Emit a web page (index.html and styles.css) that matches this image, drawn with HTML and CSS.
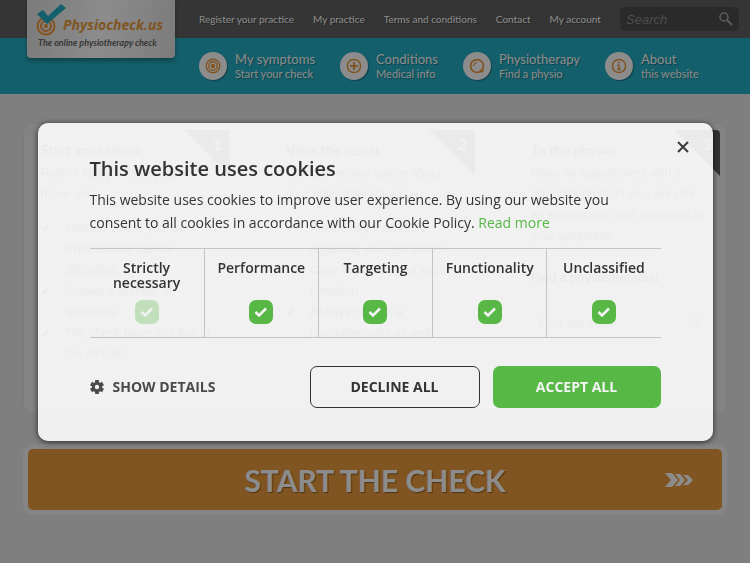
FILE: index.html
```html
<!DOCTYPE html>
<html lang="en">
<head>
  <meta charset="UTF-8">
  <meta name="viewport" content="width=device-width, initial-scale=1">
  <title>Physiocheck.us</title>
  <link rel="stylesheet" href="styles.css">
</head>
<body>
  <header>
    <a href="#" class="logo">
      <span class="logo-top">
        <svg class="logo-mark" width="32" height="34" viewBox="0 0 32 34">
          <g fill="none" stroke="#f0973a" stroke-width="2">
            <circle cx="11" cy="22" r="8.5"/>
            <circle cx="11" cy="22" r="5"/>
          </g>
          <circle cx="11" cy="22" r="2" fill="#f0973a"/>
          <path d="M2 10L8 6L13 12L26 0L31 4L12 20Z" fill="#24adc3"/>
        </svg>
        <span class="logo-name">Physiocheck.us</span>
      </span>
      <span class="logo-tagline">The online physiotherapy check</span>
    </a>

    <div class="topbar">
      <nav class="top-nav">
        <a href="#">Register your practice</a>
        <a href="#">My practice</a>
        <a href="#">Terms and conditions</a>
        <a href="#">Contact</a>
        <a href="#">My account</a>
      </nav>
      <form class="search">
        <input type="text" placeholder="Search" aria-label="Search">
        <button type="button" aria-label="Search">
          <svg width="14" height="14" viewBox="0 0 14 14" fill="none" stroke="#aaa">
            <circle cx="5" cy="5" r="4" stroke-width="1.5"/>
            <path d="M8 8L13 13" stroke-width="2"/>
          </svg>
        </button>
      </form>
    </div>

    <nav class="main-nav">
      <a href="#">
        <span class="nav-icon">
          <svg width="16" height="16" viewBox="0 0 16 16" fill="none" stroke="#eb9b3e" stroke-width="1.4">
            <circle cx="8" cy="8" r="6.8"/>
            <circle cx="8" cy="8" r="4.2"/>
            <circle cx="8" cy="8" r="1.5" fill="#eb9b3e"/>
          </svg>
        </span>
        <span class="nav-text"><strong>My symptoms</strong><small>Start your check</small></span>
      </a>
      <a href="#">
        <span class="nav-icon">
          <svg width="16" height="16" viewBox="0 0 16 16" fill="none" stroke="#eb9b3e">
            <circle cx="8" cy="8" r="6.6" stroke-width="1.5"/>
            <path d="M8 4V12M4 8H12" stroke-width="2"/>
          </svg>
        </span>
        <span class="nav-text"><strong>Conditions</strong><small>Medical info</small></span>
      </a>
      <a href="#">
        <span class="nav-icon">
          <svg width="16" height="16" viewBox="0 0 16 16" fill="none" stroke="#eb9b3e">
            <circle cx="8" cy="8" r="6.4" stroke-width="1.7"/>
            <path d="M4.5 8A4 4 0 0 1 8 4.5" stroke-width="1.2"/>
            <path d="M11.5 11.5L14 14" stroke-width="3"/>
          </svg>
        </span>
        <span class="nav-text"><strong>Physiotherapy</strong><small>Find a physio</small></span>
      </a>
      <a href="#">
        <span class="nav-icon">
          <svg width="16" height="16" viewBox="0 0 16 16" fill="none" stroke="#eb9b3e">
            <circle cx="8" cy="8" r="6.6" stroke-width="1.5"/>
            <path d="M8 3.8V5.6M6.4 7.2H8V11.5M6.2 11.5H9.8" stroke-width="1.6"/>
          </svg>
        </span>
        <span class="nav-text"><strong>About</strong><small>this website</small></span>
      </a>
    </nav>
  </header>

  <main>
    <div class="panel">
      <section class="step">
        <span class="corner">1</span>
        <h2>Start your check</h2>
        <p>Pain or injury? Make your<br>move on!</p>
        <ul>
          <li>Indicate where you are experiencing pain or difficulties.</li>
          <li>Answer a number of questions</li>
          <li>The check takes just five to ten minutes</li>
        </ul>
      </section>
      <section class="step">
        <span class="corner">2</span>
        <h2>View the result</h2>
        <p>Comprehensive advice about your physiotherapy issue</p>
        <ul>
          <li>Preliminary indication regarding your symptoms</li>
          <li>Clear explanation of each condition</li>
          <li><b>Always</b> consult a physiotherapist as well</li>
        </ul>
      </section>
      <section class="step">
        <span class="corner">3</span>
        <h2>To the physio</h2>
        <p>Make an appointment with a physiotherapist in your area for an examination and treatment of your symptoms.</p>
        <label for="zip">Find a physiotherapist</label>
        <div class="zip-box">
          <input type="text" id="zip" placeholder="Your zip-code">
          <svg width="16" height="16" viewBox="0 0 16 16" fill="none" stroke="#999">
            <circle cx="6" cy="6" r="5" stroke-width="1.2"/>
            <path d="M9.5 9.5L15 15" stroke-width="2"/>
          </svg>
        </div>
      </section>
    </div>

    <a href="#" class="start">
      <span>START THE CHECK</span>
      <svg width="29" height="14" viewBox="0 0 29 14" fill="#fff">
        <path d="M0 0H7L13 7L7 14H0L6 7Z"/>
        <path d="M10 1H15L20 7L15 13H10L15 7Z"/>
        <path d="M18 2H23L28 7L23 12H18L23 7Z"/>
      </svg>
    </a>
  </main>

  <div class="overlay">
    <div class="cookies" role="dialog" aria-labelledby="cookies-title">
      <button type="button" class="close" aria-label="Close">
        <svg width="12" height="12" viewBox="0 0 12 12" stroke="#3c3c3c" stroke-width="2">
          <path d="M1 1L11 11M11 1L1 11"/>
        </svg>
      </button>
      <h1 id="cookies-title">This website uses cookies</h1>
      <p>This website uses cookies to improve user experience. By using our website you consent to all cookies in accordance with our Cookie Policy. <a href="#">Read more</a></p>

      <div class="options">
        <div class="option">
          <label for="necessary">Strictly necessary</label>
          <input type="checkbox" id="necessary" checked disabled>
        </div>
        <div class="option">
          <label for="performance">Performance</label>
          <input type="checkbox" id="performance" checked>
        </div>
        <div class="option">
          <label for="targeting">Targeting</label>
          <input type="checkbox" id="targeting" checked>
        </div>
        <div class="option">
          <label for="functionality">Functionality</label>
          <input type="checkbox" id="functionality" checked>
        </div>
        <div class="option">
          <label for="unclassified">Unclassified</label>
          <input type="checkbox" id="unclassified" checked>
        </div>
      </div>

      <div class="actions">
        <button type="button" class="details">
          <svg width="14" height="14" viewBox="0 0 14 14">
            <g stroke="#4a4a4a" stroke-width="3.8">
              <path d="M7 0V14M1 3.5L13 10.5M13 3.5L1 10.5"/>
            </g>
            <circle cx="7" cy="7" r="5.2" fill="#4a4a4a"/>
            <circle cx="7" cy="7" r="2.2" fill="#f1f1f1"/>
          </svg>
          SHOW DETAILS
        </button>
        <button type="button" class="decline">DECLINE ALL</button>
        <button type="button" class="accept">ACCEPT ALL</button>
      </div>
    </div>
  </div>
</body>
</html>
```

FILE: styles.css
```css
* {
  box-sizing: border-box;
}
body {
  margin: 0;
  background: #e7e7e7;
  font-family: "Liberation Sans", Arial, sans-serif;
  font-size: 12px;
  color: #666;
}
a {
  text-decoration: none;
}
button {
  padding: 0;
  border: none;
  background: none;
  font-family: inherit;
  cursor: pointer;
}

/* header */
header {
  position: relative;
  font-family: Lato, sans-serif;
}
.logo {
  position: absolute;
  left: 27px;
  top: 0;
  width: 148px;
  height: 58px;
  padding: 4px 0 0 8px;
  border-radius: 0 0 4px 4px;
  background: linear-gradient(100deg, #e0e0e0, #fff 50%, #e0e0e0);
  box-shadow: 0 3px 4px rgba(0,0,0,0.3);
  font-family: "Open Sans", sans-serif;
  font-style: italic;
  font-weight: 700;
  white-space: nowrap;
}
.logo-top {
  display: flex;
  height: 34px;
}
.logo-name {
  margin-left: -4px;
  padding-top: 11px;
  font-size: 14px;
  line-height: 20px;
  color: #eb9b3e;
}
.logo-tagline {
  display: block;
  padding-left: 3px;
  font-family: Lato, sans-serif;
  font-size: 9px;
  line-height: 10px;
  color: #666;
}
.topbar {
  display: flex;
  align-items: center;
  height: 38px;
  padding: 0 11px 0 199px;
  background: #626262;
}
.top-nav {
  display: flex;
  flex: 1;
  gap: 19px;
}
.top-nav a {
  font-size: 10px;
  color: #fff;
  text-shadow: 1px 1px 1px rgba(0,0,0,0.4);
  white-space: nowrap;
}
.search {
  display: flex;
  flex-shrink: 0;
  align-items: center;
  width: 119px;
  height: 24px;
  padding: 0 6px;
  border-radius: 5px;
  background: #4b4d4c;
}
.search input {
  flex: 1;
  min-width: 0;
  padding: 0;
  border: none;
  background: none;
  font: italic 13px "Liberation Sans", Arial, sans-serif;
  color: #fff;
}
.search input::placeholder {
  color: #8c8c8c;
}
.search svg {
  display: block;
}
.main-nav {
  display: flex;
  align-items: center;
  gap: 25px;
  height: 56px;
  padding-left: 199px;
  background: #24adc3;
}
.main-nav a {
  display: flex;
  align-items: center;
  gap: 8px;
  color: #fff;
  text-shadow: 1px 1px 1px rgba(0,0,0,0.3);
  white-space: nowrap;
}
.nav-icon {
  display: flex;
  align-items: center;
  justify-content: center;
  width: 28px;
  height: 28px;
  border-radius: 50%;
  background: #fff;
  box-shadow: 1px 1px 1px rgba(0,0,0,0.3);
}
.nav-text strong,
.nav-text small {
  display: block;
  font-weight: 400;
  font-size: 13px;
  line-height: 16px;
}
.nav-text small {
  font-size: 11px;
  line-height: 14px;
}

/* steps */
main {
  padding: 29px 23px;
}
.panel {
  display: grid;
  grid-template-columns: repeat(3, 1fr);
  gap: 45px;
  height: 291px;
  padding: 6px;
  border: 1px solid #e0e0e0;
  border-radius: 10px;
  background: #efefee;
}
.step {
  position: relative;
  min-width: 0;
  padding: 9px 11px;
  line-height: 21px;
}
.step h2 {
  margin: 0 0 3px;
  font: 700 14px/21px Lato, sans-serif;
}
.step p {
  margin: 0 0 13px;
}
.step ul {
  margin: 0;
  padding: 0;
  list-style: none;
}
.step li {
  position: relative;
  padding-left: 24px;
}
.step li::before {
  content: "✔";
  position: absolute;
  left: 0;
}
.corner {
  position: absolute;
  top: 0;
  right: 0;
  width: 46px;
  height: 46px;
  padding-right: 8px;
  border-radius: 0 4px 0 0;
  background: #5c5c5c;
  clip-path: polygon(0 0, 100% 0, 100% 100%);
  font: 700 16px/28px Lato, sans-serif;
  text-align: right;
  color: #fff;
}
.step label {
  display: block;
  margin: 21px 0;
  font-weight: 700;
}
.zip-box {
  display: flex;
  align-items: center;
  padding: 4px 6px;
}
.zip-box input {
  flex: 1;
  min-width: 0;
  padding: 0;
  border: none;
  background: none;
  font: italic 13px "Liberation Sans", Arial, sans-serif;
}
.start {
  display: flex;
  align-items: center;
  justify-content: center;
  position: relative;
  height: 71px;
  margin-top: 30px;
  border: 5px solid #f3f3f2;
  border-radius: 10px;
  background: #eb9b3e;
  font: 700 30px/36px Lato, sans-serif;
  color: #fff;
  text-shadow: 1px 1px 1px rgba(0,0,0,0.4);
}
.start svg {
  position: absolute;
  right: 28px;
}

/* cookie dialog */
.overlay {
  position: fixed;
  inset: 0;
  display: flex;
  align-items: center;
  justify-content: center;
  background: rgba(0,0,0,0.45);
}
.cookies {
  position: relative;
  width: 90%;
  padding: 31px 52px 33px;
  border-radius: 10px;
  background: rgba(249,249,249,0.93);
  box-shadow: 0 1px 6px rgba(0,0,0,0.7);
  font-family: "Open Sans", sans-serif;
  color: #333;
}
.close {
  position: absolute;
  top: 18px;
  right: 24px;
}
.close svg {
  display: block;
}
.cookies h1 {
  margin: 0 0 4px;
  font-size: 20px;
  line-height: 30px;
  font-weight: 600;
}
.cookies p {
  margin: 0 0 14px;
  font-size: 14px;
  line-height: 23px;
}
.cookies p a {
  color: #57b846;
}
.options {
  display: grid;
  grid-template-columns: repeat(5, 1fr);
  border-top: 1px solid #c4c4c4;
  border-bottom: 1px solid #c4c4c4;
}
.option {
  display: flex;
  flex-direction: column;
  align-items: center;
  justify-content: space-between;
  height: 88px;
  padding: 11px 10px 13px;
  border-left: 1px solid #c4c4c4;
}
.option:first-child {
  border-left: none;
}
.option label {
  font-size: 14px;
  line-height: 15px;
  font-weight: 600;
  text-align: center;
}
.option input {
  appearance: none;
  width: 24px;
  height: 24px;
  margin: 0;
  border-radius: 7px;
  background: #57b846 url("data:image/svg+xml,%3Csvg xmlns='http://www.w3.org/2000/svg' viewBox='0 0 24 24' fill='none' stroke='%23f4f4f4' stroke-width='2.6'%3E%3Cpath d='M6.5 12L10 15.5L17 8.5'/%3E%3C/svg%3E");
}
.option input:disabled {
  opacity: 0.3;
}
.actions {
  display: flex;
  gap: 13px;
  margin-top: 28px;
}
.actions button {
  height: 42px;
  border-radius: 7px;
  font-size: 14px;
  font-weight: 700;
}
.actions .details {
  display: flex;
  flex: 1;
  align-items: center;
  gap: 9px;
  color: #4a4a4a;
}
.actions .decline {
  width: 170px;
  border: 1px solid #333;
  color: #333;
}
.actions .accept {
  width: 168px;
  background: #57b846;
  color: #f4f4f4;
}
```
